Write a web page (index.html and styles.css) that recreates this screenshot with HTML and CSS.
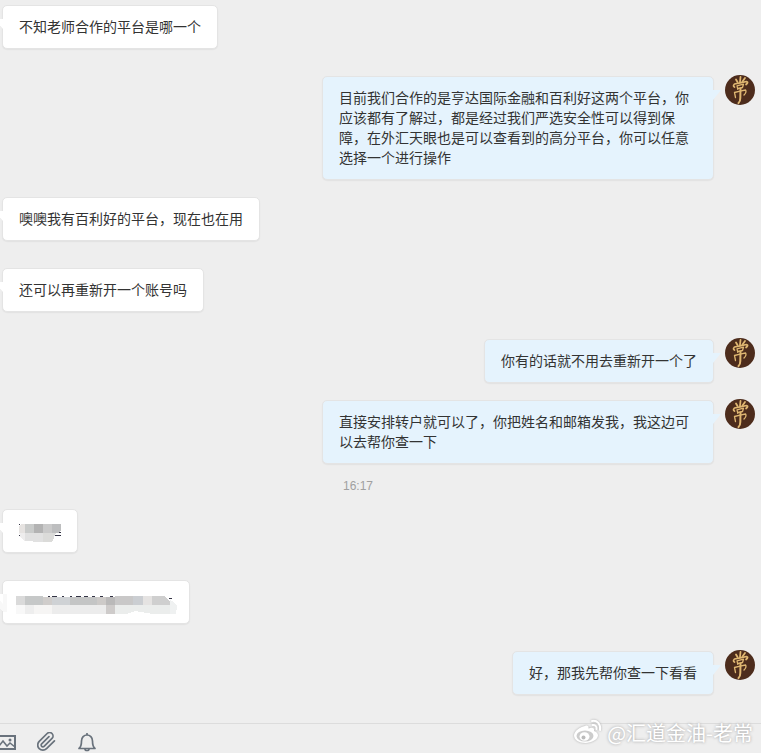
FILE: index.html
```html
<!DOCTYPE html>
<html lang="zh-CN">

<head>
    <title>聊天</title>
    <meta charset="utf-8">
    <meta name="viewport" content="width=device-width, initial-scale=1">
    <link rel="stylesheet" href="styles.css">
</head>

<body>
    <!-- shared avatar drawing -->
    <svg class="defs" aria-hidden="true">
        <symbol id="avatar" viewBox="0 0 30 30">
            <circle cx="15" cy="15" r="15" fill="#4d2c1c" />
            <g fill="none" stroke="#dfb772" stroke-linecap="round" stroke-linejoin="round">
                <path stroke-width="1.8" d="M15.500 2L15 7M11 4.500L12.500 7M20 3L17.500 6.500" />
                <path stroke-width="1.700" d="M9.500 12Q7.500 11 9.500 9Q15 8 21.500 6.500Q24 7 21 9.500" />
                <path stroke-width="1.300" d="M12 10.800L12.800 14.300M12 10.800L18.500 9.200L17.500 12.500L13 13.500" />
                <path stroke-width="1.300" d="M9.500 17.500L10.500 22.500M9.500 17.500Q15 16 20.500 15Q22 17 19 20" />
                <path stroke-width="2" d="M15.500 13.500L15.300 23Q15.300 26.500 13.500 28" />
            </g>
        </symbol>
    </svg>

    <main class="chat">
        <div class="row">
            <div class="bubble">不知老师合作的平台是哪一个</div>
        </div>
        <div class="row mine">
            <div class="bubble">目前我们合作的是亨达国际金融和百利好这两个平台，你应该都有了解过，都是经过我们严选安全性可以得到保障，在外汇天眼也是可以查看到的高分平台，你可以任意选择一个进行操作</div>
            <svg class="avatar"><use href="#avatar" /></svg>
        </div>
        <div class="row">
            <div class="bubble">噢噢我有百利好的平台，现在也在用</div>
        </div>
        <div class="row">
            <div class="bubble">还可以再重新开一个账号吗</div>
        </div>
        <div class="row mine">
            <div class="bubble">你有的话就不用去重新开一个了</div>
            <svg class="avatar"><use href="#avatar" /></svg>
        </div>
        <div class="row mine">
            <div class="bubble">直接安排转户就可以了，你把姓名和邮箱发我，我这边可以去帮你查一下</div>
            <svg class="avatar"><use href="#avatar" /></svg>
        </div>
        <time class="time">16:17</time>
        <div class="row">
            <div class="bubble">
                <svg class="mosaic" width="42" height="20" viewBox="0 0 42 20" shape-rendering="crispEdges">
                    <path d="M0 4h1v1H0zM0 15h2v1H0zM36 15h6v1h-6zM40 12h2v1h-2z" fill="#334" />
                    <path d="M0 6L2 4H6V13H0z" fill="#e6e3e1" />
                    <path d="M6 4h9v9H6z" fill="#c9cbca" />
                    <path d="M15 4h9v9h-9z" fill="#b3b3b3" />
                    <path d="M24 4h9v9h-9z" fill="#cacaca" />
                    <path d="M33 4h9v6l-3 3h-6z" fill="#bdbebf" />
                    <path d="M0 13h6v8L2 18z" fill="#eeeded" />
                    <path d="M6 13h18v9H14v-1H6z" fill="#e1e1e1" />
                    <path d="M24 13h13l-4 9h-9z" fill="#dbdbd9" />
                </svg>
            </div>
        </div>
        <div class="row">
            <div class="bubble">
                <svg class="mosaic" width="154" height="20" viewBox="0 0 154 20" shape-rendering="crispEdges">
                    <path d="M29 5.500h2m2 0h5m5 0h2m6 0h2m4 0h5m3 0h4m4 0h3m5 0h3m7 0h3m56 2h3" fill="none" stroke="#334" />
                    <path d="M-3 5h9v9h-9z" fill="#dadada" />
                    <path d="M6 5h18v9H6z" fill="#c6c8c8" />
                    <path d="M24 6h9v8h-9z" fill="#d0cdcb" />
                    <path d="M33 6h18v8H33z" fill="#cfd2d5" />
                    <path d="M51 6h27v8H51z" fill="#c4c5c5" />
                    <path d="M78 6h9v8h-9z" fill="#cdcac8" />
                    <path d="M87 6h9v8h-9z" fill="#bab9b9" />
                    <path d="M96 5h18v9H96z" fill="#c9c8c8" />
                    <path d="M114 5h10v9h-10z" fill="#cbced2" />
                    <path d="M124 5h9v9h-9z" fill="#e5e3e2" />
                    <path d="M133 5h12l6 5v4h-18z" fill="#cfcfcf" />
                    <path d="M151 9l4 2 3 4-1 8h-6z" fill="#eff1f1" />
                    <path d="M-3 14h9v9h-9z" fill="#f8f8f8" />
                    <path d="M6 14h9v9H6z" fill="#eee" />
                    <path d="M15 14h18v9H15z" fill="#f6f5f4" />
                    <path d="M33 14h54v9H33z" fill="#ececec" />
                    <path d="M87 14h9v9h-9z" fill="#cecbca" />
                    <path d="M96 14h55v9h-17l-18-3-8 3H96z" fill="#ebedec" />
                    <path d="M-19 3h7v18h-3l-4-3z" fill="#f8f8f8" />
                </svg>
            </div>
        </div>
        <div class="row mine">
            <div class="bubble">好，那我先帮你查一下看看</div>
            <svg class="avatar"><use href="#avatar" /></svg>
        </div>
    </main>

    <footer class="toolbar">
        <button class="tool" type="button" aria-label="图片">
            <svg width="20" height="20" viewBox="0 0 20 20" fill="none" stroke="#69727c" stroke-width="2">
                <path d="M1 4h17v13H1z" />
                <path d="M2 14l4-5 4 5 3-3 5 4" stroke-width="1.600" />
                <circle cx="13" cy="8" r="1.500" fill="#69727c" stroke="none" />
            </svg>
        </button>
        <button class="tool" type="button" aria-label="附件">
            <svg width="20" height="20" viewBox="0 0 20 20" fill="none" stroke="#69727c" stroke-width="2" stroke-linecap="round" stroke-linejoin="round">
                <path transform="translate(-1 -.7) scale(.86)" d="M21.440 11.050l-9.190 9.190a6 6 0 0 1-8.490-8.490l9.190-9.190a4 4 0 0 1 5.660 5.660l-9.200 9.190a2 2 0 0 1-2.830-2.830l8.490-8.480" />
            </svg>
        </button>
        <button class="tool" type="button" aria-label="提醒">
            <svg width="20" height="20" viewBox="0 0 20 20" fill="none" stroke="#69727c" stroke-width="1.700" stroke-linejoin="round">
                <path d="M2 16.500c2-1.500 2.500-3 2.500-7.500C4.500 5.500 7 3 10 3s5.500 2.500 5.500 6c0 4.500.5 6 2.500 7.500z" />
                <path d="M10 1v2M8 17c0 2 4 2 4 0" />
            </svg>
        </button>
    </footer>

    <div class="watermark">
        <svg width="30" height="28" viewBox="0 0 30 28">
            <path fill="#fff" d="M12 7c2-1 4-.5 3.500 2.500 3-1.200 6.500-1 5.500 2.500 2.500.8 4 2.300 4 4.300 0 4-6 7.700-12.500 7.700S1 21 1 16.500C1 12.500 7 7.500 12 7z" />
            <ellipse cx="12" cy="17" rx="8.500" ry="5.500" fill="#ccc" />
            <ellipse cx="11.500" cy="17.500" rx="5" ry="4.300" fill="#fff" />
            <circle cx="10.500" cy="18.500" r="2" fill="#bbb" />
            <path fill="none" stroke="#fff" stroke-width="2" stroke-linecap="round" d="M19 2c5-1 9 3 8 9M19.500 6c2.500-.5 4.500 1.500 4 4" />
        </svg>
        <span>@汇道金油-老常</span>
    </div>
</body>

</html>
```
FILE: styles.css
```css
* {
    box-sizing: border-box;
}

body {
    margin: 0;
    min-height: 100vh;
    display: flex;
    flex-direction: column;
    background: #eee;
    color: #333;
    font: 14px/20px "Noto Sans CJK SC", sans-serif;
    overflow-x: hidden;
}

.defs {
    position: absolute;
    width: 0;
    height: 0;
}

.chat {
    flex: 1;
    padding: 4px 6px 0 2px;
}

.row {
    display: flex;
    align-items: flex-start;
    margin-bottom: 26px;
}

.mine {
    justify-content: flex-end;
    margin-bottom: 16px;
}

.bubble {
    position: relative;
    max-width: 392px;
    margin-top: 1px;
    padding: 10px 16px 12px;
    border: 1px solid #e4e4e4;
    border-radius: 5px;
    background: #fff;
    box-shadow: 0 1px 1px #e2e2e2;
}

.mine .bubble {
    background: #e5f3fd;
}

/* bubble tail */
.bubble::before {
    content: "";
    position: absolute;
    top: 13px;
    left: -8px;
    width: 8px;
    height: 10px;
    background: #fff;
    clip-path: polygon(0 0, 100% 0, 100% 100%);
}

.mine .bubble::before {
    left: auto;
    right: -8px;
    background: #e5f3fd;
    clip-path: polygon(0 0, 100% 0, 0 100%);
}

.avatar {
    flex: none;
    width: 30px;
    height: 30px;
    margin-left: 11px;
}

.mosaic {
    display: block;
    overflow: visible;
}

.time {
    display: block;
    margin: 14px 0;
    padding-right: 41px;
    color: #a0a0a0;
    font: 12px/16px "Liberation Sans", sans-serif;
    text-align: center;
}

/* the time label sits a little closer to the message above it */
.mine:has(+ .time) {
    margin-bottom: 0;
}

.toolbar {
    display: flex;
    gap: 20px;
    height: 30px;
    padding-top: 8px;
    border-top: 1px solid #dcdcdc;
}

.tool {
    width: 20px;
    height: 20px;
    padding: 0;
    border: 0;
    background: none;
}

.tool:first-child {
    margin-left: -3px;
}

.tool svg {
    display: block;
}

.watermark {
    position: absolute;
    right: 8px;
    bottom: 6px;
    display: flex;
    align-items: center;
    gap: 4px;
    color: #fff;
    font-size: 20px;
    line-height: 28px;
    text-shadow: 0 0 3px #999;
}

.watermark svg {
    filter: drop-shadow(0 0 1px #aaa);
}
```
